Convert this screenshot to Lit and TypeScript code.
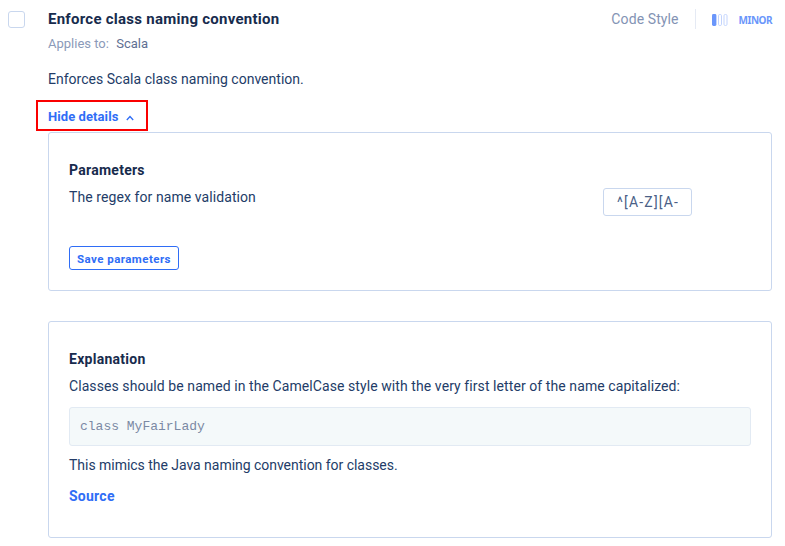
import { LitElement, html, css, svg } from "lit";
import { customElement } from "lit/decorators.js";

@customElement("severity-badge")
class SeverityBadge extends LitElement {
  static styles = css`
    :host { display: flex; align-items: center; color: #6a96fb; padding-top: 2px; }
    svg { display: block; margin-right: 11px; }
    .label { font: 700 10px/20px "Noto Sans", sans-serif; letter-spacing: -0.5px; }
  `;
  render() {
    return html`<svg width="16" height="12" viewBox="0 0 16 12" fill="none">
        <rect x="0" y="0" width="4.4" height="12" rx="1.4" fill="#6a96fb" />
        ${[6.5, 12].map((x) => svg`<rect x=${x} y="0.5" width="3" height="11" rx="1.2" stroke="#c3d4fd" />`)}
      </svg><span class="label">MINOR</span>`;
  }
}

@customElement("app-root")
class AppRoot extends LitElement {
  static styles = css`
    * { box-sizing: border-box; }
    :host {
      display: block; width: 785px; height: 546px; overflow: hidden; background: #fff;
      font: 400 14px/20px Roboto, sans-serif; color: #233c68; letter-spacing: 0.08px;
    }
    .pattern { display: flex; padding: 9px 13px 0 8px; }
    .check { width: 17px; height: 17px; margin-top: 2px; border: 1px solid #c9d7ee; border-radius: 3px; flex: none; }
    .body { flex: 1; margin-left: 23px; min-width: 0; }
    .head { display: flex; justify-content: space-between; height: 20px; align-items: center; }
    h2, h3, p, pre { margin: 0; }
    h2, h3 { font-size: 14px; line-height: 20px; font-weight: 700; color: #172b4d; letter-spacing: 0.27px; }
    .title { font-size: 15px; letter-spacing: 0.26px; }
    .meta { display: flex; align-items: center; }
    .category { color: #8393b4; letter-spacing: 0.1px; }
    .divider { width: 1px; height: 20px; background: #e5eaf4; margin: 0 16px; }
    .applies { margin-top: 5px; font-size: 13px; line-height: 19px; color: #8b9ab9; letter-spacing: 0; }
    .applies span { color: #5e6f92; margin-left: 4px; }
    .summary { margin-top: 16px; letter-spacing: 0.02px; }
    .toggle {
      display: flex; align-items: center; width: 112px; height: 31px; margin: 11px 0 0 -12px;
      padding: 2px 0 0 10px; border: 2px solid #fa0000; background: none;
      color: #2f6df6; font: 700 13px/20px Roboto, sans-serif; letter-spacing: 0.08px; white-space: nowrap;
    }
    .toggle svg { margin: 3px 0 0 8px; }
    .card { border: 1px solid #c9d7ee; border-radius: 3px; padding: 27px 20px 0; }
    .params { height: 159px; margin-top: 1px; }
    .row { display: flex; justify-content: space-between; margin-top: 7px; height: 59px; align-items: flex-start; }
    .field {
      width: 89px; height: 28px; margin: 1px 59px 0 0; padding: 0 13px; border: 1px solid #c9d7ee;
      border-radius: 3px; color: #4b5f87; font: 400 14px/26px Roboto, sans-serif; letter-spacing: 1.2px;
    }
    .save {
      display: block; width: 110px; height: 24px; padding: 1px 0 0; border: 1px solid #2f6df6; border-radius: 3px;
      background: #fff; color: #2f6df6; font: 700 11.5px/20px Roboto, sans-serif; letter-spacing: 0.45px; white-space: nowrap;
    }
    .explain { height: 217px; margin-top: 30px; }
    .explain p { margin-top: 7px; white-space: nowrap; }
    pre {
      height: 39px; margin: 11px 0 9px; padding: 0 10px; border: 1px solid #e2eaf3; border-radius: 3px; background: #f4f9fa;
      color: #7b89a4; font: 400 13px/37px "Liberation Mono", monospace; letter-spacing: 0;
    }
    .explain .after { margin-top: 0; letter-spacing: -0.03px; }
    .source { display: block; margin-top: 11px; color: #2f6df6; font-weight: 700; letter-spacing: 0.25px; text-decoration: none; }
  `;
  render() {
    return html`<div class="pattern">
      <div class="check"></div>
      <div class="body">
        <div class="head">
          <h2 class="title">Enforce class naming convention</h2>
          <div class="meta"><span class="category">Code Style</span><i class="divider"></i><severity-badge></severity-badge></div>
        </div>
        <div class="applies">Applies to: <span>Scala</span></div>
        <p class="summary">Enforces Scala class naming convention.</p>
        <button class="toggle">Hide details<svg width="8" height="6" viewBox="0 0 8 6" fill="none" stroke="#2f6df6" stroke-width="1.3"><path d="M0.8 5 4 1.5 7.2 5" /></svg></button>
        <section class="card params">
          <h3>Parameters</h3>
          <div class="row"><span class="desc">The regex for name validation</span><input class="field" value="^[A-Z][A-Za-z]*" /></div>
          <button class="save">Save parameters</button>
        </section>
        <section class="card explain">
          <h3>Explanation</h3>
          <p class="long">Classes should be named in the CamelCase style with the very first letter of the name capitalized:</p>
          <pre>class MyFairLady</pre>
          <p class="after">This mimics the Java naming convention for classes.</p>
          <a class="source">Source</a>
        </section>
      </div>
    </div>`;
  }
}
